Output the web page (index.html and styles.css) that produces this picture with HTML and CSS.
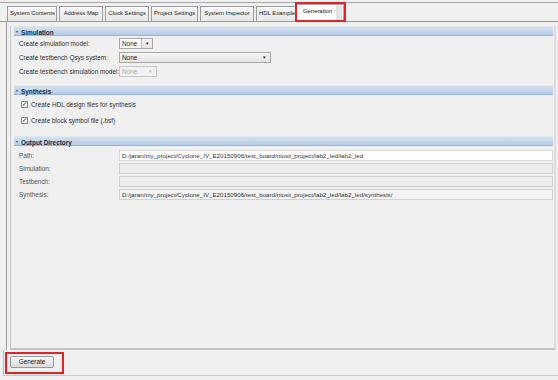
FILE: index.html
```html
<!DOCTYPE html>
<html>
<head>
<meta charset="utf-8">
<link rel="stylesheet" href="styles.css">
</head>
<body>
<div class="app">
  <div class="tabs">
    <div class="tab t1">System Contents</div>
    <div class="tab t2">Address Map</div>
    <div class="tab t3">Clock Settings</div>
    <div class="tab t4">Project Settings</div>
    <div class="tab t5">System Inspector</div>
    <div class="tab t6">HDL Example</div>
    <div class="tab active">Generation<span class="mark mark-tab"></span></div>
  </div>
  <div class="frame">
    <div class="panel">
      <div class="section-head"><span class="tri">&#9662;</span>Simulation</div>
      <div class="sim">
        <div class="row">
          <span class="label">Create simulation model:</span>
          <span class="combo small"><span class="val">None</span><span class="arrow">&#9662;</span></span>
        </div>
        <div class="row">
          <span class="label">Create testbench Qsys system:</span>
          <span class="combo wide"><span class="val">None</span><span class="arrow plain">&#9662;</span></span>
        </div>
        <div class="row">
          <span class="label">Create testbench simulation model:</span>
          <span class="combo disabled"><span class="val">None</span><span class="arrow plain">&#9662;</span></span>
        </div>
      </div>
      <div class="section-head"><span class="tri">&#9662;</span>Synthesis</div>
      <div class="synth">
        <div class="check-row"><span class="cb">&#10003;</span>Create HDL design files for synthesis</div>
        <div class="check-row"><span class="cb">&#10003;</span>Create block symbol file (.bsf)</div>
      </div>
      <div class="section-head"><span class="tri">&#9662;</span>Output Directory</div>
      <div class="out">
        <div class="orow"><span class="label">Path:</span><span class="field white">D:/jaran/my_project/Cyclone_IV_E20150906/test_board/niosii_project/lab2_led/lab2_led</span></div>
        <div class="orow"><span class="label">Simulation:</span><span class="field gray"></span></div>
        <div class="orow"><span class="label">Testbench:</span><span class="field gray"></span></div>
        <div class="orow"><span class="label">Synthesis:</span><span class="field light">D:/jaran/my_project/Cyclone_IV_E20150906/test_board/niosii_project/lab2_led/lab2_led/synthesis/</span></div>
      </div>
    </div>
  </div>
  <div class="footer">
    <div class="btn">Generate<span class="mark mark-btn"></span></div>
  </div>
</div>
</body>
</html>
```

FILE: styles.css
```css
* { box-sizing: border-box; }
html, body { margin: 0; padding: 0; }
body {
  width: 558px;
  height: 380px;
  background: #f0f0f0;
  font-family: "Liberation Sans", Arial, sans-serif;
  font-size: 6.4px;
  color: #222;
  overflow: hidden;
}
.app {
  display: flex;
  flex-direction: column;
  border-top: 1px solid #a8a8a8;
  margin-top: 2px;
  height: 378px;
}
.tabs {
  display: flex;
  padding-left: 7px;
  height: 19px;
  align-items: flex-end;
  border-bottom: 1px solid #9a9a9a;
  font-size: 5.9px;
}
.tab {
  position: relative;
  height: 15px;
  line-height: 13px;
  padding: 0 2px;
  border: 1px solid #9c9c9c;
  border-bottom: none;
  margin-right: 2px;
  background: linear-gradient(#fafafa, #e6e6e6);
  white-space: nowrap;
  text-align: center;
  overflow: hidden;
}
.t1 { width: 50px; }
.t2 { width: 44px; }
.t3 { width: 44px; }
.t4 { width: 47px; }
.t5 { width: 54px; }
.t6 { width: 40px; margin-right: 0; text-align: left; }
.tab.active {
  height: 18px;
  line-height: 12px;
  background: linear-gradient(90deg, #fbfbfb 0, #fbfbfb 39px, #e4e4e4 39px, #e4e4e4 45px, #fbfbfb 45px);
  margin-bottom: -1px;
  padding: 0 0 0 6px;
  width: 48px;
  text-align: left;
  border-color: #aaa;
  overflow: visible;
}
.mark {
  position: absolute;
  border: 2px solid #e0242c;
  pointer-events: none;
}
.mark-tab { left: -2px; top: -3px; width: 51px; height: 20px; }
.mark-btn { left: -6px; top: -5px; width: 59px; height: 22px; }

.frame {
  flex: 1;
  margin-left: 6px;
  border-left: 1px solid #a0a0a0;
  padding: 4px 2px 0 3px;
  display: flex;
  flex-direction: column;
}
.panel {
  flex: 1;
  border-left: 1px solid #c8c8c8;
  border-bottom: 2px solid #c4c4c4;
  padding-left: 3px;
  padding-right: 1px;
  border-right: 2px solid #dcdcdc;
}
.section-head {
  height: 10px;
  line-height: 9px;
  background: linear-gradient(#d3e2f2, #b6cce6);
  border-top: 1px solid #e0e8f2;
  border-bottom: 1px solid #9fb4ce;
  font-weight: bold;
  color: #152c4a;
  padding-left: 2px;
}
.tri { font-size: 4px; vertical-align: 2px; margin-right: 3px; color: #445; font-weight: normal; }

.sim { padding: 2px 0 8px 5px; display: flex; flex-direction: column; gap: 3px; }
.row { display: flex; align-items: center; height: 11px; }
.label { width: 100px; flex: none; white-space: nowrap; color: #333; }
.combo {
  display: flex;
  height: 11px;
  border: 1px solid #a8a8a8;
  background: linear-gradient(#f6f6f6, #e4e4e4);
  align-items: center;
}
.combo .val { flex: 1; padding-left: 2px; line-height: 9px; }
.combo .arrow { width: 11px; text-align: center; font-size: 5px; border-left: 1px solid #b8b8b8; height: 9px; line-height: 9px; }
.combo .arrow.plain { border-left: none; }
.combo.small { width: 34px; }
.combo.small .val { background: #fff; height: 9px; }
.combo.wide { width: 152px; }
.combo.disabled { width: 38px; color: #aaa; border-color: #c8c8c8; background: #f2f2f2; }
.combo.disabled .arrow { color: #bbb; }

.synth { padding: 5px 0 11px 7px; display: flex; flex-direction: column; gap: 7px; }
.check-row { display: flex; align-items: center; height: 9px; white-space: nowrap; color: #333; }
.cb {
  width: 7px; height: 7px;
  border: 1px solid #8a8a8a;
  background: #f4f4f4;
  font-size: 6px;
  line-height: 5px;
  text-align: center;
  color: #333;
  margin-right: 3px;
}

.out { padding: 3px 0 0 5px; display: flex; flex-direction: column; font-size: 6.2px; }
.orow { display: flex; align-items: center; height: 13px; }
.orow .label { color: #555; font-size: 6.4px; }
.field {
  flex: 1;
  height: 11px;
  line-height: 9px;
  padding-left: 2px;
  border: 1px solid #c8c8c8;
  white-space: nowrap;
  overflow: hidden;
  color: #333;
}
.field.white { background: #fff; border-color: #d8d8d8; }
.field.gray { background: #ececec; border-color: #d0d0d0; }
.field.light { background: #f3f3f3; border-color: #d0d0d0; }

.footer {
  height: 26px;
  margin-left: 3px;
  border-left: 1px solid #b8b8b8;
  border-bottom: 1px solid #c8c8c8;
  padding: 6px 0 0 6px;
  margin-bottom: 4px;
}
.btn {
  position: relative;
  width: 44px;
  height: 12px;
  line-height: 10px;
  text-align: center;
  border: 1px solid #9a9a9a;
  background: linear-gradient(#f7f7f7, #dcdcdc);
  border-radius: 2px;
  color: #222;
}
```
